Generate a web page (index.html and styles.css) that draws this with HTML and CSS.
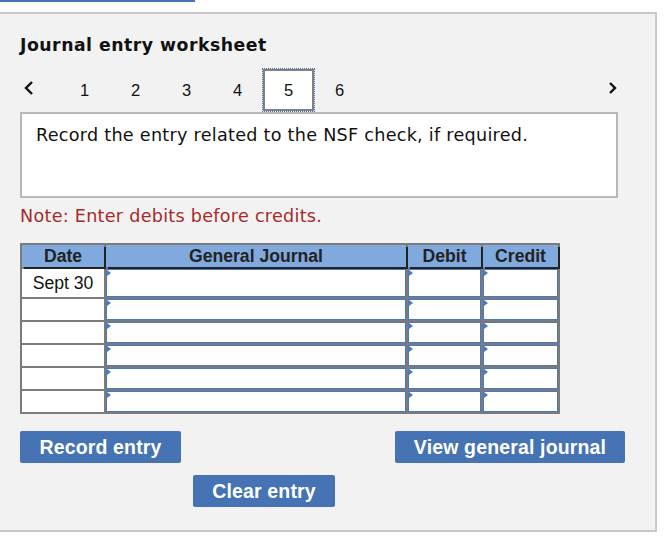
FILE: index.html
```html
<!DOCTYPE html>
<html>
<head>
    <title>Journal entry worksheet</title>
    <link rel="stylesheet" href="styles.css">
</head>
<body>
    <div class="tabbar"><div class="tabbar-active"></div></div>

    <div class="panel">
        <h2 class="title">Journal entry worksheet</h2>

        <div class="steps">
            <button class="arrow prev" aria-label="Previous">
                <svg width="12" height="16" viewBox="0 0 12 16"><polyline points="9,2 3,8 9,14" fill="none" stroke="#111" stroke-width="2.4"/></svg>
            </button>
            <span class="step">1</span>
            <span class="step">2</span>
            <span class="step">3</span>
            <span class="step">4</span>
            <span class="step active">5</span>
            <span class="step">6</span>
            <button class="arrow next" aria-label="Next">
                <svg width="12" height="16" viewBox="0 0 12 16"><polyline points="3,3 8,8 3,13" fill="none" stroke="#111" stroke-width="2.4"/></svg>
            </button>
        </div>

        <div class="prompt">Record the entry related to the NSF check, if required.</div>

        <p class="note">Note: Enter debits before credits.</p>

        <div class="journal">
            <div class="head">Date</div>
            <div class="head">General Journal</div>
            <div class="head">Debit</div>
            <div class="head">Credit</div>

            <div class="date">Sept 30</div>
            <div class="field"></div>
            <div class="field"></div>
            <div class="field"></div>

            <div class="date"></div>
            <div class="field"></div>
            <div class="field"></div>
            <div class="field"></div>

            <div class="date"></div>
            <div class="field"></div>
            <div class="field"></div>
            <div class="field"></div>

            <div class="date"></div>
            <div class="field"></div>
            <div class="field"></div>
            <div class="field"></div>

            <div class="date"></div>
            <div class="field"></div>
            <div class="field"></div>
            <div class="field"></div>

            <div class="date"></div>
            <div class="field"></div>
            <div class="field"></div>
            <div class="field"></div>
        </div>

        <div class="actions">
            <button class="btn record">Record entry</button>
            <button class="btn view">View general journal</button>
        </div>
        <div class="actions-bottom">
            <button class="btn clear">Clear entry</button>
        </div>
    </div>
</body>
</html>
```

FILE: styles.css
```css
body {
    margin: 0;
    background-color: white;
    font-family: "DejaVu Sans", Verdana, sans-serif;
    color: #111;
}

.tabbar {
    height: 12px;
}

.tabbar-active {
    width: 195px;
    height: 2px;
    background-color: #4673b3;
}

.panel {
    width: 635px;
    padding: 0 0 23px 20px;
    background-color: #f2f2f2;
    border: 2px solid #c8c8c8;
    border-left: none;
}

.title {
    margin: 0;
    padding-top: 21px;
    font-size: 17.3px;
    font-weight: bold;
    letter-spacing: 0.5px;
    line-height: 21px;
}

/* step navigation */
.steps {
    display: flex;
    align-items: center;
    height: 43px;
    margin-top: 13px;
    font-family: "Liberation Sans", Arial, sans-serif;
    font-size: 16.5px;
}

.arrow {
    display: flex;
    align-items: center;
    padding: 0;
    background: none;
    border: none;
    cursor: pointer;
}

.prev {
    width: 39px;
    margin-top: -5px;
    padding-left: 3px;
}

.next {
    margin-left: auto;
    margin-right: 36px;
    margin-top: -6px;
}

.step {
    width: 51px;
    height: 42px;
    box-sizing: border-box;
    display: flex;
    align-items: center;
    justify-content: center;
    margin-bottom: 1px;
}

.step.active {
    background-color: white;
    border: 2px solid #808080;
    outline: 1px dotted #3f6fb5;
    position: relative;
    z-index: 1;
}

.prompt {
    width: 598px;
    height: 86px;
    box-sizing: border-box;
    padding: 10px 14px;
    background-color: white;
    border: 2px solid #b9b9b9;
    font-size: 17.6px;
    letter-spacing: 0.27px;
    line-height: 22px;
}

.note {
    margin: 8px 0 0;
    color: #a62a2a;
    font-size: 17.6px;
    letter-spacing: 0.27px;
    line-height: 21px;
}

/* journal grid */
.journal {
    display: grid;
    grid-template-columns: 82px 300px 73px 75px;
    grid-template-rows: 22px 28px repeat(5, 21px);
    gap: 2px;
    width: max-content;
    margin-top: 16px;
    background-color: #7b7b7b;
    border: 2px solid #7b7b7b;
    font-family: "Liberation Sans", Arial, sans-serif;
    font-size: 17.6px;
}

.head {
    display: flex;
    align-items: center;
    justify-content: center;
    background-color: #80a9de;
    color: #222;
    font-weight: bold;
    box-shadow: 2px 2px 0 #222;
}

.date {
    display: flex;
    align-items: center;
    justify-content: center;
    background-color: white;
}

.field {
    position: relative;
    background-color: white;
    border: 1px solid #4a79bd;
}

.field::before {
    content: "";
    position: absolute;
    left: 0;
    top: 0;
    border-left: 4px solid #4a79bd;
    border-top: 3px solid transparent;
    border-bottom: 3px solid transparent;
}

/* buttons */
.actions {
    display: flex;
    justify-content: space-between;
    width: 605px;
    margin-top: 17px;
}

.actions-bottom {
    margin-top: 12px;
    padding-left: 173px;
}

.btn {
    height: 32px;
    padding: 0;
    background-color: #4573b3;
    color: white;
    border: none;
    border-radius: 2px;
    font-family: "Liberation Sans", Arial, sans-serif;
    font-size: 19.5px;
    font-weight: bold;
    letter-spacing: 0.15px;
    cursor: pointer;
}

.record {
    width: 161px;
}

.view {
    width: 230px;
}

.clear {
    width: 142px;
}
```
